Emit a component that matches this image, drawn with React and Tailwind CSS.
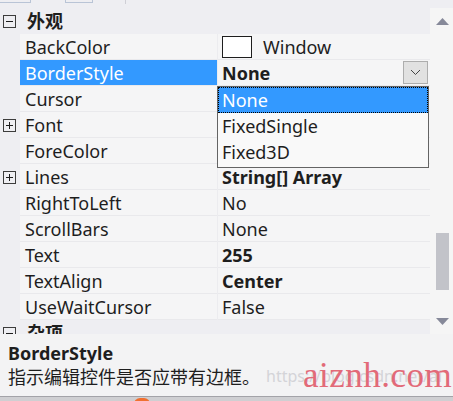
import React from "react";

const FONT = { fontFamily: '"Noto Sans", "Noto Sans CJK SC", sans-serif' };

function Box({ plus }) {
  return (
    <svg width="13" height="13" viewBox="0 0 13 13" className="block">
      <rect x="0.5" y="0.5" width="12" height="12" fill="none" stroke="#3c3c3c" strokeWidth="1" />
      <line x1="3" y1="6.5" x2="10" y2="6.5" stroke="#1e1e1e" strokeWidth="1" />
      {plus && <line x1="6.5" y1="3" x2="6.5" y2="10" stroke="#1e1e1e" strokeWidth="1" />}
    </svg>
  );
}

const rows = [
  { n: "BackColor", v: "Window", swatch: true },
  { n: "BorderStyle", v: "None", bold: true, selected: true },
  { n: "Cursor", v: "" },
  { n: "Font", v: "", plus: true },
  { n: "ForeColor", v: "" },
  { n: "Lines", v: "String[] Array", bold: true, plus: true },
  { n: "RightToLeft", v: "No" },
  { n: "ScrollBars", v: "None" },
  { n: "Text", v: "255", bold: true },
  { n: "TextAlign", v: "Center", bold: true },
  { n: "UseWaitCursor", v: "False" },
];

function Row({ r }) {
  return (
    <div className="flex h-[26px] shrink-0">
      <div className="w-[20px] shrink-0 bg-[#eeeef2] flex items-center justify-start pl-[3px]">
        {r.plus && <Box plus />}
      </div>
      <div
        className={
          "w-[197px] shrink-0 flex items-center pl-[5px] border-b border-[#e9e9ec] " +
          (r.selected ? "bg-[#3399ff] text-white" : "bg-[#f5f5f6] text-[#1e1e1e]")
        }
      >
        <span className="text-[18px] leading-none">{r.n}</span>
      </div>
      <div className="w-[1px] shrink-0 bg-[#ececef]" />
      <div className="w-[212px] shrink-0 flex items-center pl-[4px] bg-[#f5f5f6] border-b border-[#e9e9ec] relative text-[#1e1e1e]">
        {r.swatch && (
          <div className="w-[30px] h-[22px] bg-white border border-[#1e1e1e] mr-[11px] shrink-0" />
        )}
        {r.v && <span className={"text-[18px] leading-none " + (r.bold ? "font-bold" : "")}>{r.v}</span>}
        {r.selected && (
          <div className="ml-auto mr-[2px] w-[25px] h-[23px] bg-[#e1e1e1] border border-[#adadad] flex items-center justify-center">
            <svg width="11" height="7" viewBox="0 0 11 7">
              <polyline points="1,1 5.5,5.5 10,1" fill="none" stroke="#444" strokeWidth="1" />
            </svg>
          </div>
        )}
      </div>
    </div>
  );
}

export default function App() {
  return (
    <div className="w-[453px] h-[401px] bg-[#eeeef2] relative overflow-hidden flex flex-col" style={FONT}>
      {/* top toolbar remnants */}
      <div className="h-[8px] shrink-0 flex items-start">
        <div className="w-[31px] h-[3px] border-b border-r border-[#b9c4d6]" />
        <div className="w-[34px]" />
        <div className="w-[28px] h-[3px] border-b border-l border-r border-[#b9c4d6]" />
        <div className="w-[32px]" />
        <div className="w-[1px] h-[4px] bg-[#cfcfd6]" />
      </div>

      <div className="flex h-[326px] shrink-0">
        <div className="w-[430px] shrink-0 flex flex-col overflow-hidden">
          {/* category */}
          <div className="h-[26px] shrink-0 flex items-center bg-[#eeeef2]">
            <div className="w-[20px] pl-[3px] shrink-0">
              <Box />
            </div>
            <span className="pl-[7px] text-[18px] font-bold leading-none text-[#1e1e1e]">外观</span>
          </div>
          {rows.map((r) => (
            <Row key={r.n} r={r} />
          ))}
          <div className="h-[26px] shrink-0 flex items-center bg-[#eeeef2]">
            <div className="w-[20px] pl-[3px] shrink-0">
              <Box />
            </div>
            <span className="pl-[7px] text-[18px] font-bold leading-none text-[#1e1e1e]">杂项</span>
          </div>
        </div>
        {/* scrollbar */}
        <div className="w-[23px] shrink-0 bg-[#f5f5f5] flex flex-col">
          <div className="h-[26px] shrink-0 flex items-center justify-center pl-[2px]">
            <svg width="13" height="7" viewBox="0 0 13 7">
              <polygon points="0,7 6.5,0 13,7" fill="#868999" />
            </svg>
          </div>
          <div className="flex-1 flex flex-col items-center pl-[2px]">
            <div className="mt-[199px] w-[13px] h-[57px] bg-[#c2c3c9]" />
          </div>
          <div className="h-[26px] shrink-0 flex items-center justify-center pl-[2px]">
            <svg width="13" height="7" viewBox="0 0 13 7">
              <polygon points="0,0 6.5,7 13,0" fill="#868999" />
            </svg>
          </div>
        </div>
      </div>

      {/* description pane */}
      <div className="h-[62px] shrink-0 bg-[#f3f3f4] px-[8px] pt-[7px] text-[#1e1e1e]">
        <div className="text-[18px] font-bold leading-[24px]">BorderStyle</div>
        <div className="text-[18px] leading-[24px] whitespace-nowrap">指示编辑控件是否应带有边框。</div>
      </div>
      <div className="flex-1 bg-[#cfcfd2] border-t border-[#a3a3a8] relative">
        <div className="absolute left-[134px] top-[1px] w-[16px] h-[6px] rounded-t-full bg-[#f07030]" />
      </div>

      {/* dropdown list overlay */}
      <div className="absolute left-[217px] top-[86px] w-[212px] h-[82px] bg-[#f9f9f9] border border-[#646464] flex flex-col text-[18px] text-[#1e1e1e]">
        <div className="h-[26px] bg-[#3399ff] text-white flex items-center pl-[3px] border border-dotted border-black leading-none">
          None
        </div>
        <div className="h-[26px] flex items-center pl-[4px] leading-none">FixedSingle</div>
        <div className="h-[26px] flex items-center pl-[4px] leading-none">Fixed3D</div>
      </div>

      {/* watermarks */}
      <div className="absolute left-[266px] top-[368px] text-[16px] text-[#d4d4d8] whitespace-nowrap leading-none">
        https://blog.csdn.net/ai
      </div>
      <div
        className="absolute left-[303px] top-[358px] text-[35px] text-[#e26a78] leading-none tracking-[0.5px] whitespace-nowrap"
        style={{ fontFamily: '"Liberation Serif", serif' }}
      >
        aiznh.com
      </div>
    </div>
  );
}
